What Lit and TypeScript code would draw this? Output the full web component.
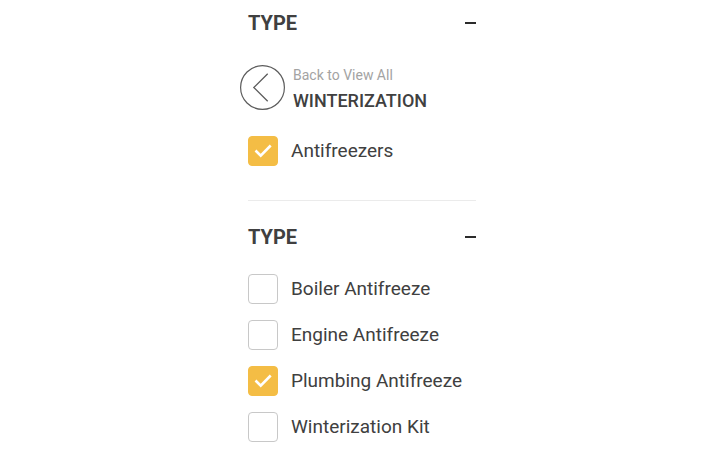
import { LitElement, html, css } from "lit";
import { customElement, property, state } from "lit/decorators.js";

interface Option {
  label: string;
  checked: boolean;
}

@customElement("filter-section")
class FilterSection extends LitElement {
  @property() heading = "";
  @state() private open = true;

  static styles = css`
    :host {
      display: block;
    }
    .header {
      display: flex;
      align-items: center;
      justify-content: space-between;
      padding-left: 8px;
    }
    .title {
      margin: 0;
      font-size: 20px;
      line-height: 24px;
      font-weight: 700;
      color: #404040;
    }
    .toggle {
      display: flex;
      align-items: center;
      justify-content: flex-end;
      width: 24px;
      height: 24px;
      padding: 0;
      border: 0;
      background: none;
      color: #2b2b2b;
      cursor: pointer;
    }
    .toggle svg {
      display: block;
    }
  `;

  render() {
    return html`
      <div class="header">
        <h2 class="title">${this.heading}</h2>
        <button
          class="toggle"
          type="button"
          aria-label="Toggle ${this.heading}"
          aria-expanded=${this.open ? "true" : "false"}
          @click=${() => (this.open = !this.open)}
        >
          <svg width="11" height="12" viewBox="0 0 11 12" fill="currentColor" aria-hidden="true">
            <path d=${this.open ? "M0 5h11v2H0z" : "M0 5h4.5V.5h2V5H11v2H6.5v4.5h-2V7H0z"} />
          </svg>
        </button>
      </div>
      ${this.open ? html`<slot></slot>` : null}
    `;
  }
}

@customElement("app-root")
class AppRoot extends LitElement {
  @state() private categories: Option[] = [{ label: "Antifreezers", checked: true }];
  @state() private types: Option[] = [
    { label: "Boiler Antifreeze", checked: false },
    { label: "Engine Antifreeze", checked: false },
    { label: "Plumbing Antifreeze", checked: true },
    { label: "Winterization Kit", checked: false },
  ];

  static styles = css`
    :host {
      display: block;
      font-family: Roboto, "Liberation Sans", sans-serif;
      color: #404040;
      background: #fff;
    }
    .panel {
      max-width: 237px;
      margin: 0 auto;
      padding: 11px 1px 12px 0;
      box-sizing: border-box;
    }
    .back {
      display: flex;
      align-items: flex-start;
      gap: 8px;
      margin-top: 30px;
      color: inherit;
      text-decoration: none;
    }
    .back svg {
      display: block;
      flex: none;
    }
    .back-text {
      display: flex;
      flex-direction: column;
      gap: 4px;
    }
    .back-hint {
      font-size: 14px;
      line-height: 20px;
      color: #a3a3a3;
    }
    .back-name {
      font-size: 18px;
      line-height: 24px;
      font-weight: 500;
    }
    .options {
      display: flex;
      flex-direction: column;
      gap: 16px;
      margin: 25px 0 0;
      padding: 0 0 0 8px;
      list-style: none;
    }
    .category {
      margin-top: 23px;
    }
    .option {
      display: flex;
      align-items: center;
      gap: 13px;
      font-size: 19px;
      line-height: 24px;
      cursor: pointer;
    }
    .box {
      display: grid;
      flex: none;
      width: 30px;
      height: 30px;
    }
    .box > * {
      grid-area: 1 / 1;
    }
    .input {
      appearance: none;
      width: 30px;
      height: 30px;
      margin: 0;
      box-sizing: border-box;
      border: 1px solid #c8c8c8;
      border-radius: 4px;
      background: #fff;
      cursor: pointer;
    }
    .input:checked {
      border-color: #f4bd45;
      background: #f4bd45;
    }
    .tick {
      display: none;
      pointer-events: none;
    }
    .input:checked + .tick {
      display: block;
    }
    .divider {
      height: 1px;
      margin: 34px 0 24px 8px;
      border: 0;
      background: #ebebeb;
    }
  `;

  private optionList(options: Option[], className: string) {
    return html`
      <ul class="options ${className}">
        ${options.map(
          (option) => html`
            <li>
              <label class="option">
                <span class="box">
                  <input class="input" type="checkbox" .checked=${option.checked} />
                  <svg class="tick" width="30" height="30" viewBox="0 0 30 30" fill="none" aria-hidden="true">
                    <path d="M7.5 14.5l5.2 5.2L22.7 9.5" stroke="#fff" stroke-width="2.6" />
                  </svg>
                </span>
                <span>${option.label}</span>
              </label>
            </li>
          `,
        )}
      </ul>
    `;
  }

  render() {
    return html`
      <div class="panel">
        <filter-section heading="TYPE">
          <a class="back" href="#">
            <svg width="45" height="45" viewBox="0 0 45 45" fill="none" stroke="#5c5c5c" aria-hidden="true">
              <circle cx="22.5" cy="22.5" r="21.9" stroke-width="1.2" />
              <path d="M27.7 8.7L13.8 22.5l13.9 13.7" stroke-width="1.3" />
            </svg>
            <span class="back-text">
              <span class="back-hint">Back to View All</span>
              <span class="back-name">WINTERIZATION</span>
            </span>
          </a>
          ${this.optionList(this.categories, "category")}
        </filter-section>
        <hr class="divider" />
        <filter-section heading="TYPE">
          ${this.optionList(this.types, "type")}
        </filter-section>
      </div>
    `;
  }
}
